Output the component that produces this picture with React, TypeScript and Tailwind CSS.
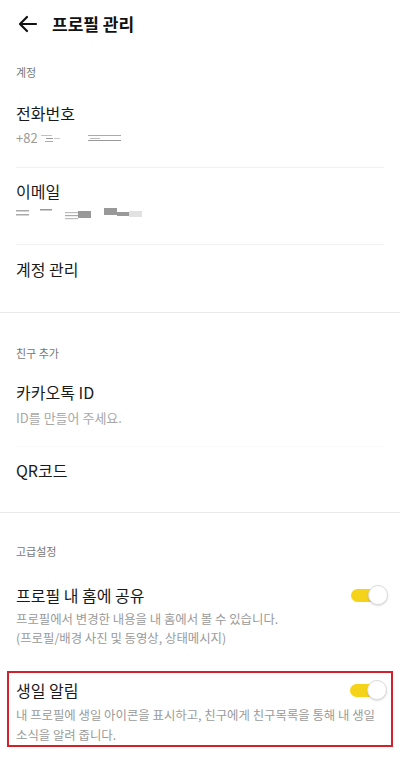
import React from "react";

const font = { fontFamily: '"Noto Sans CJK KR", "Noto Sans", sans-serif' };

function Toggle() {
  return (
    <div className="relative w-[37px] h-[20px] shrink-0">
      <div className="absolute left-0 top-[4px] w-[34px] h-[13px] rounded-full bg-[#f6d31b]" />
      <div className="absolute right-0 top-0 w-[20px] h-[20px] rounded-full bg-white border border-[#dcdcdc] shadow-[0_1px_2px_rgba(0,0,0,0.15)]" />
    </div>
  );
}

function Divider() {
  return <div className="mx-4 h-px bg-[#f1f1f1]" />;
}

function SectionDivider() {
  return <div className="h-px bg-[#e8e8e8]" />;
}

export default function App() {
  return (
    <div className="w-[400px] h-[758px] bg-white overflow-hidden" style={font}>
      {/* header */}
      <div className="h-[48px] flex items-center pl-[16px]">
        <svg width="24" height="24" viewBox="0 0 24 24" fill="none" stroke="#111" strokeWidth="2.2" strokeLinecap="round" strokeLinejoin="round" className="mr-[12px]">
          <path d="M20 12H5" />
          <path d="M11 5l-7 7 7 7" />
        </svg>
        <span className="text-[17px] font-bold text-[#111] leading-[24px]">프로필 관리</span>
      </div>

      {/* section 1 */}
      <div className="pt-[16px] pb-[8px] px-4 text-[11px] leading-[16px] text-[#777]">계정</div>
      <div className="px-4 pt-[13px] pb-[19px]">
        <div className="text-[16px] leading-[24px] text-[#1a1a1a]">전화번호</div>
        <div className="mt-[3px] h-[20px] flex items-center text-[13px] text-[#9a9a9a]">
          <span>+82</span>
          <svg width="100" height="20" viewBox="0 0 100 20" className="ml-[1px]">
            <rect x="2" y="7" width="11" height="1" fill="#c0c0c0" />
            <rect x="7" y="10" width="7" height="1" fill="#999" />
            <rect x="6" y="13" width="8" height="1" fill="#aaa" />
            <rect x="15" y="10" width="6" height="1" fill="#c8c8c8" />
            <rect x="49" y="7" width="33" height="1" fill="#aaa" />
            <rect x="51" y="10" width="10" height="1" fill="#bbb" />
            <rect x="49" y="12" width="33" height="1" fill="#999" />
          </svg>
        </div>
      </div>
      <Divider />
      <div className="px-4 pt-[11px] pb-[18px]">
        <div className="text-[16px] leading-[24px] text-[#1a1a1a]">이메일</div>
        <div className="mt-[3px] h-[20px] flex items-center">
          <svg width="150" height="20" viewBox="0 0 150 20">
            <rect x="0" y="4" width="13" height="1.5" fill="#aaa" />
            <rect x="0" y="8" width="13" height="1.5" fill="#aaa" />
            <rect x="24" y="3" width="12" height="1.5" fill="#999" />
            <rect x="49" y="6" width="13" height="1.2" fill="#bbb" />
            <rect x="49" y="9" width="13" height="1.2" fill="#aaa" />
            <rect x="49" y="12" width="13" height="1.2" fill="#bbb" />
            <rect x="62" y="5" width="13" height="7" fill="#999" />
            <rect x="88" y="2" width="13" height="7" fill="#999" />
            <rect x="101" y="6" width="12" height="4" fill="#999" />
            <rect x="113" y="5" width="13" height="6" fill="#e2e2e2" />
          </svg>
        </div>
      </div>
      <Divider />
      <div className="px-4 pt-[12px] pb-[31px]">
        <div className="text-[16px] leading-[24px] text-[#1a1a1a]">계정 관리</div>
      </div>
      <SectionDivider />

      {/* section 2 */}
      <div className="pt-[32px] px-4 text-[11px] leading-[16px] text-[#777]">친구 추가</div>
      <div className="px-4 pt-[19px] pb-[18px]">
        <div className="text-[16px] leading-[24px] text-[#1a1a1a]">카카오톡 ID</div>
        <div className="mt-[4px] text-[13px] leading-[20px] text-[#a8a8a8]">ID를 만들어 주세요.</div>
      </div>
      <div className="mx-4 h-px bg-[#fafafa]" />
      <div className="px-4 pt-[11px] pb-[30px]">
        <div className="text-[16px] leading-[24px] text-[#1a1a1a]">QR코드</div>
      </div>
      <SectionDivider />

      {/* section 3 */}
      <div className="pt-[30px] px-4 text-[11px] leading-[16px] text-[#777]">고급설정</div>
      <div className="px-4 pt-[24px]">
        <div className="flex items-center justify-between">
          <div className="text-[16px] leading-[24px] text-[#1a1a1a]">프로필 내 홈에 공유</div>
          <div className="mr-[-4px]"><Toggle /></div>
        </div>
        <div className="mt-[3px] text-[12.4px] leading-[19px] text-[#9a9a9a]">
          프로필에서 변경한 내용을 내 홈에서 볼 수 있습니다.
          <br />
          (프로필/배경 사진 및 동영상, 상태메시지)
        </div>
      </div>

      <div className="mt-[23px] mx-[7px] border-2 border-[#d3212c] px-[7px] pt-[5px]">
        <div className="flex items-center justify-between">
          <div className="text-[16px] leading-[24px] text-[#1a1a1a]">생일 알림</div>
          <div className="mr-[-3px]"><Toggle /></div>
        </div>
        <div className="mt-[3px] text-[12.4px] leading-[20px] text-[#9a9a9a]">
          내 프로필에 생일 아이콘을 표시하고, 친구에게 친구목록을 통해 내 생일 소식을 알려 줍니다.
        </div>
      </div>
    </div>
  );
}
